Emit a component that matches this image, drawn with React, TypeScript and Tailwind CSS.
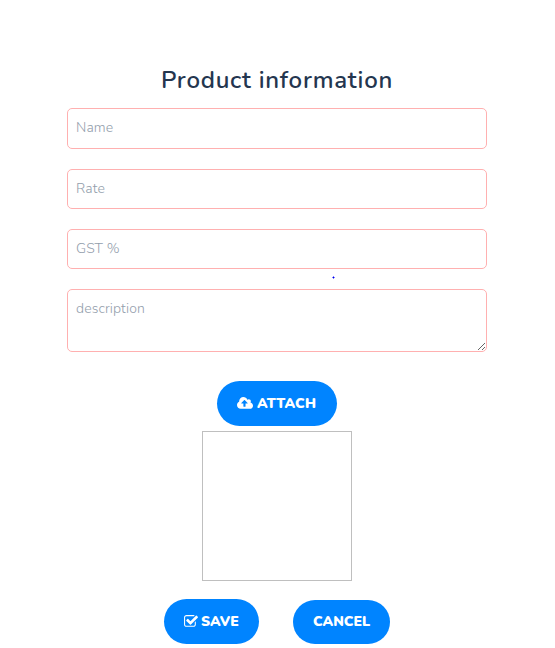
import { ReactNode } from "react";
import clsx from "clsx";

interface IFieldProps {
  name: string;
  placeholder: string;
  className?: string;
}

interface IButtonProps {
  name: string;
  icon?: ReactNode;
  type?: "button" | "submit";
  className?: string;
}

function CloudUploadIcon() {
  return (
    <svg viewBox="0 0 1920 1792" className="w-[16px] h-[15px] fill-current">
      <path d="M1280 864q0-14-9-23l-352-352q-9-9-23-9t-23 9l-351 351q-10 12-10 24 0 14 9 23t23 9h224v352q0 13 9.5 22.5t22.5 9.5h192q13 0 22.5-9.5t9.5-22.5v-352h224q13 0 22.5-9.5t9.5-22.5zm640 288q0 159-112.5 271.5t-271.5 112.5h-1088q-185 0-316.5-131.5t-131.5-316.5q0-130 70-240t188-165q-2-30-2-43 0-212 150-362t362-150q156 0 285.5 87t188.5 231q71-62 166-62 106 0 181 75t75 181q0 76-41 138 130 31 213.5 135.5t83.5 238.5z" />
    </svg>
  );
}

function CheckSquareIcon() {
  return (
    <svg viewBox="64 0 1664 1792" className="w-[14px] h-[15px] fill-current">
      <path d="M1472 930v318q0 119-84.5 203.5t-203.5 84.5h-832q-119 0-203.5-84.5t-84.5-203.5v-832q0-119 84.5-203.5t203.5-84.5h832q63 0 117 25 15 7 18 23 3 17-9 29l-49 49q-10 10-23 10-3 0-9-2-23-6-45-6h-832q-66 0-113 47t-47 113v832q0 66 47 113t113 47h832q66 0 113-47t47-113v-254q0-13 9-22l64-64q10-10 23-10 6 0 12 3 20 8 20 29zm231-489l-814 814q-24 24-57 24t-57-24l-430-430q-24-24-24-57t24-57l110-110q24-24 57-24t57 24l263 263 647-647q24-24 57-24t57 24l110 110q24 24 24 57t-24 57z" />
    </svg>
  );
}

function Field({ name, placeholder, className }: IFieldProps) {
  return (
    <input
      name={name}
      placeholder={placeholder}
      className={clsx(
        "block w-full px-2 pb-[2px] border border-[#ffb0b0] rounded-[5px] text-[14px] font-light tracking-[0.1px] placeholder:text-[#939eac] focus:outline-none",
        className
      )}
    />
  );
}

function Button({ name, icon, type = "button", className }: IButtonProps) {
  return (
    <button
      type={type}
      className={clsx(
        "flex items-center pl-5 rounded-full bg-[#0084ff] text-white text-[14px] font-black whitespace-nowrap cursor-pointer",
        className
      )}
    >
      {icon}
      <span>{name}</span>
    </button>
  );
}

export default function App() {
  return (
    <div className="w-[555px] h-[648px] overflow-hidden bg-white font-['Nunito','Lato',sans-serif]">
      <form className="w-[420px] ml-[67px] pt-[62px]">
        <h2 className="h-[46px] text-center text-[24px] leading-[36px] font-semibold tracking-[0.76px] text-[#24364f]">
          Product information
        </h2>
        <Field name="name" placeholder="Name" className="h-[41px]" />
        <Field name="rate" placeholder="Rate" className="h-10 mt-5" />
        <Field name="gst" placeholder="GST %" className="h-10 mt-5" />
        <div className="h-5 pt-[7px] pl-[265px]">
          <svg viewBox="0 0 3 3" className="w-[3px] h-[3px]">
            <path d="M1 0h1v3h-1zM0 1h3v1h-3z" fill="#8080ff" />
            <path d="M1 1h1v1h-1z" fill="#0000dd" />
          </svg>
        </div>
        <textarea
          name="description"
          placeholder="description"
          className="block w-full h-[63px] px-2 py-[9px] border border-[#ffb0b0] rounded-[5px] text-[14px] leading-[20px] font-light tracking-[0.1px] placeholder:text-[#939eac] focus:outline-none"
        />
        <div className="flex flex-col items-center mt-[29px]">
          <Button
            name="ATTACH"
            icon={<CloudUploadIcon />}
            className="w-[120px] h-[45px] gap-1 tracking-[0.25px]"
          />
          <div className="w-[150px] h-[150px] mt-[5px] border border-[#bfbfbf]" />
        </div>
        <div className="flex items-end gap-[34px] mt-[18px] ml-[97px]">
          <Button
            type="submit"
            name="SAVE"
            icon={<CheckSquareIcon />}
            className="w-[95px] h-[45px] gap-[3px]"
          />
          <Button name="CANCEL" className="w-[97px] h-[44px] pb-px" />
        </div>
      </form>
    </div>
  );
}
